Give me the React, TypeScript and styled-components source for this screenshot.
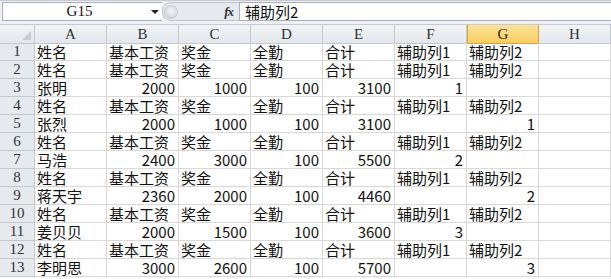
import React from "react";
import styled, { createGlobalStyle, css } from "styled-components";

const Global = createGlobalStyle`
  html, body { margin: 0; padding: 0; background: #fff; }
  body { width: 611px; height: 279px; overflow: hidden; }
`;

const Page = styled.div`
  width: 611px;
  height: 279px;
  overflow: hidden;
  background: #fff;
  display: flex;
  flex-direction: column;
`;

const FormulaBar = styled.div`
  display: flex;
  align-items: stretch;
  background: #eef0f3;
  border-top: 1px solid #c6cbd2;
  padding: 1px 0 0 2px;
  box-sizing: border-box;
  height: 21px;
`;

const NameBox = styled.div`
  width: 146px;
  background: #fff;
  border: 1px solid #a7afba;
  border-right: none;
  display: flex;
  align-items: center;
  justify-content: center;
  font-family: "Liberation Serif", "DejaVu Serif", serif;
  font-size: 15px;
  color: #111;
  padding-left: 8px;
  box-sizing: border-box;
`;

const DropArrow = styled.div`
  width: 14px;
  background: #fff;
  border-top: 1px solid #a7afba;
  border-bottom: 1px solid #a7afba;
  display: flex;
  align-items: center;
  justify-content: center;
  box-sizing: border-box;
  &::after {
    content: "";
    border-left: 4px solid transparent;
    border-right: 4px solid transparent;
    border-top: 4px solid #222;
  }
`;

const Pill = styled.div`
  width: 77px;
  display: flex;
  align-items: center;
  justify-content: space-between;
  padding: 0 6px 0 0;
  box-sizing: border-box;
  background: #e6e9ee;
  border-radius: 9px 0 0 9px;
  border: 1px solid #bfc5cd;
  border-right: none;
`;

const Knob = styled.div`
  width: 14px;
  height: 14px;
  border-radius: 50%;
  margin-left: 1px;
  background: radial-gradient(circle at 50% 40%, #f4f5f7 0%, #d5d9df 70%, #c3c8cf 100%);
  border: 1px solid #c8ccd2;
  box-sizing: border-box;
`;

const Fx = styled.span`
  font-family: "Liberation Serif", "DejaVu Serif", serif;
  font-style: italic;
  font-weight: bold;
  font-size: 13px;
  color: #333;
  letter-spacing: -1px;
`;

const FormulaInput = styled.div`
  flex: 1;
  background: #fff;
  border: 1px solid #a7afba;
  border-right: none;
  display: flex;
  align-items: center;
  padding-left: 5px;
  font-family: "Noto Sans CJK SC", "Noto Sans", sans-serif;
  font-size: 15px;
  color: #111;
  box-sizing: border-box;
  line-height: 1;
`;

const Spacer = styled.div`
  height: 3px;
  background: #eef0f3;
  border-bottom: 1px solid #c6cbd2;
`;

const Grid = styled.div`
  display: grid;
  grid-template-columns: 35px repeat(8, 72px);
  grid-auto-rows: 18px;
`;

const headerBase = css`
  box-sizing: border-box;
  display: flex;
  align-items: center;
  justify-content: center;
  font-family: "Liberation Serif", "DejaVu Serif", serif;
  font-size: 15px;
  line-height: 1;
  color: #333;
  background: linear-gradient(#f2f4f7, #e3e6eb);
  border-right: 1px solid #c3c8cf;
  border-bottom: 1px solid #c3c8cf;
`;

const ColHead = styled.div<{ $sel?: boolean }>`
  ${headerBase}
  height: 19px;
  ${(p) =>
    p.$sel &&
    css`
      background: linear-gradient(#fbe29c, #f7cf5f);
      border: 1px solid #e0a23b;
      border-top: none;
      color: #222;
    `}
`;

const Corner = styled.div`
  ${headerBase}
  height: 19px;
  position: relative;
  &::after {
    content: "";
    position: absolute;
    right: 3px;
    bottom: 3px;
    border-left: 9px solid transparent;
    border-bottom: 9px solid #c9ccd1;
  }
`;

const RowHead = styled.div`
  ${headerBase}
  background: #e6e9ee;
`;

const Cell = styled.div<{ $num?: boolean }>`
  box-sizing: border-box;
  border-right: 1px solid #d9d9d9;
  border-bottom: 1px solid #d9d9d9;
  display: flex;
  align-items: flex-end;
  justify-content: ${(p) => (p.$num ? "flex-end" : "flex-start")};
  padding: 0 3px 0 2px;
  font-family: "Noto Sans CJK SC", "Noto Sans", sans-serif;
  font-size: 15px;
  line-height: 16px;
  height: 18px;
  color: #111;
  white-space: nowrap;
`;

const HEAD = ["姓名", "基本工资", "奖金", "全勤", "合计", "辅助列1", "辅助列2", ""];

type Row = (string | number)[];

const rows: Row[] = [
  HEAD,
  HEAD,
  ["张明", 2000, 1000, 100, 3100, 1, "", ""],
  HEAD,
  ["张烈", 2000, 1000, 100, 3100, "", 1, ""],
  HEAD,
  ["马浩", 2400, 3000, 100, 5500, 2, "", ""],
  HEAD,
  ["蒋天宇", 2360, 2000, 100, 4460, "", 2, ""],
  HEAD,
  ["姜贝贝", 2000, 1500, 100, 3600, 3, "", ""],
  HEAD,
  ["李明思", 3000, 2600, 100, 5700, "", 3, ""],
];

const COLS = ["A", "B", "C", "D", "E", "F", "G", "H"];

export default function App() {
  return (
    <Page>
      <Global />
      <FormulaBar>
        <NameBox>G15</NameBox>
        <DropArrow />
        <Pill>
          <Knob />
          <Fx>fx</Fx>
        </Pill>
        <FormulaInput>辅助列2</FormulaInput>
      </FormulaBar>
      <Spacer />
      <Grid>
        <Corner />
        {COLS.map((c) => (
          <ColHead key={c} $sel={c === "G"}>
            {c}
          </ColHead>
        ))}
        {rows.map((r, i) => (
          <React.Fragment key={i}>
            <RowHead>{i + 1}</RowHead>
            {r.map((v, j) => (
              <Cell key={j} $num={typeof v === "number"}>
                {v}
              </Cell>
            ))}
          </React.Fragment>
        ))}
      </Grid>
    </Page>
  );
}
